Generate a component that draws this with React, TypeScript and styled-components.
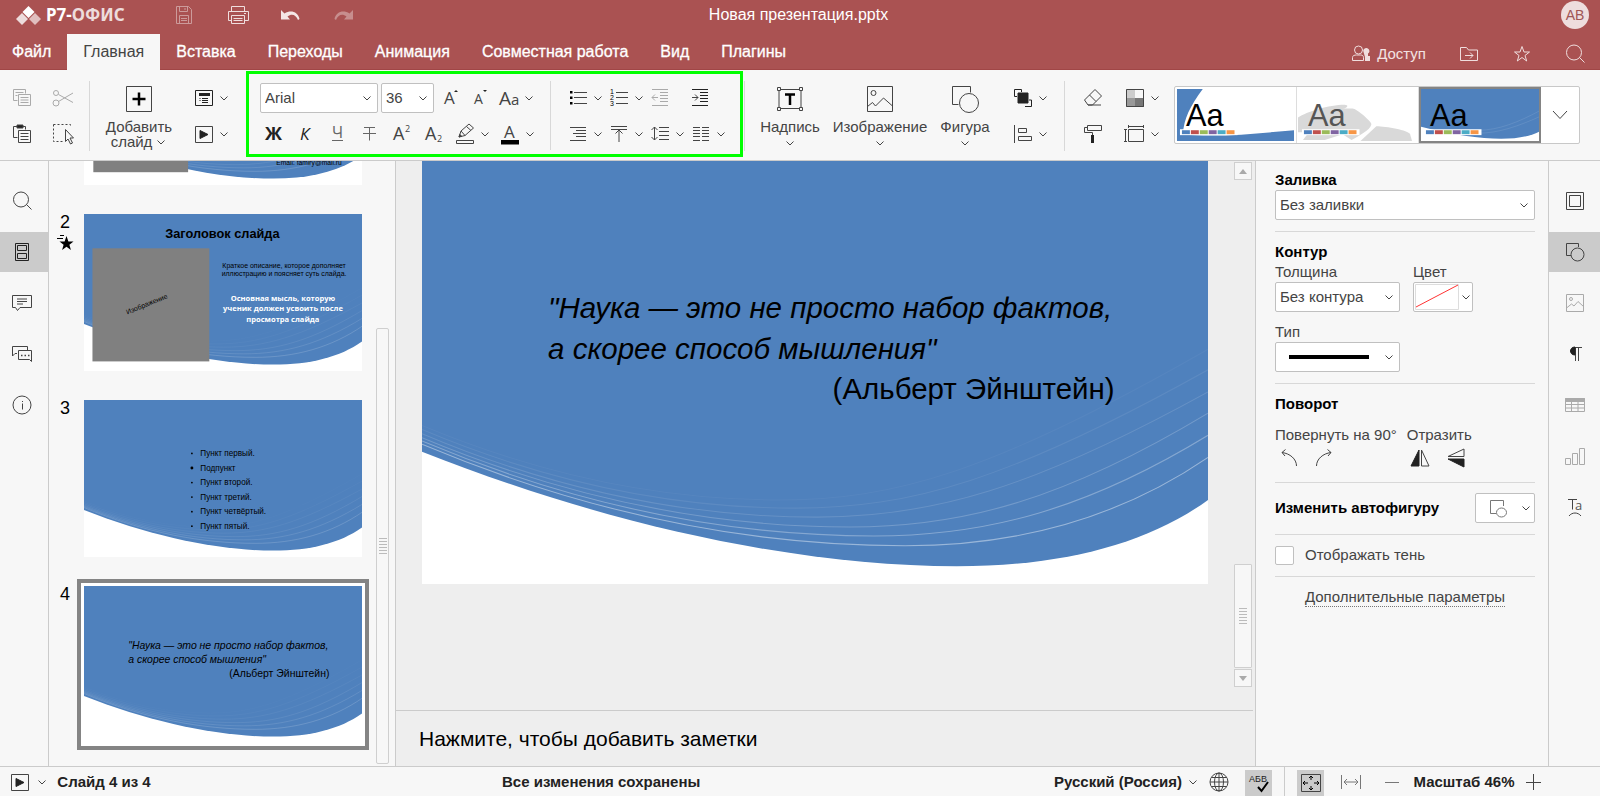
import React from 'react';
import styled, { createGlobalStyle, css } from 'styled-components';

const SANS = '"Liberation Sans", Arial, sans-serif';
const BLUE = '#4f81bd';

const Global = createGlobalStyle`
  *, *::before, *::after { box-sizing: border-box; }
  html, body, #root { height: 100%; margin: 0; }
  body { font: 15px/20px ${SANS}; color: #444; background: #f7f7f7; overflow: hidden; }
  button, select, input, textarea { font: inherit; color: inherit; margin: 0; }
  button { background: none; border: 0; padding: 0; cursor: pointer; white-space: nowrap; }
`;

const Shell = styled.div`
  display: flex;
  flex-direction: column;
  height: 100vh;
`;

/* ---------- icons ---------- */

const Svg = styled.svg<{ $tone?: string }>`
  display: block;
  flex: none;
  fill: none;
  stroke: ${p => p.$tone || '#444'};
  stroke-width: 1;
  overflow: visible;
`;

type IconProps = { w?: number; h?: number; tone?: string; children: React.ReactNode };
const Icon = ({ w = 20, h = 20, tone, children }: IconProps) => (
  <Svg width={w} height={h} viewBox={`0 0 ${w} ${h}`} $tone={tone} aria-hidden="true">{children}</Svg>
);

const Chevron = () => (
  <Icon w={12} h={8}><path d="M2.500 2.500L6 6l3.500-3.500" /></Icon>
);

/* ---------- header ---------- */

const Header = styled.header`
  flex: none;
  background: #aa5252;
  color: #fff;
  border-bottom: 1px solid #a04646;
`;

const TitleRow = styled.div`
  display: grid;
  grid-template-columns: 1fr auto 1fr;
  align-items: center;
  height: 30px;
  padding: 0 11px 0 16px;
`;

const TitleLeft = styled.div`
  display: flex;
  align-items: center;
`;

const Brand = styled.a`
  display: flex;
  align-items: center;
  gap: 5px;
  width: 157px;
  height: 26px;
  color: #fff;
  text-decoration: none;
  font: 700 17px/26px "Noto Sans", sans-serif;
`;

const BrandTail = styled.span`
  color: #eddcdc;
`;

const QuickButton = styled.button`
  display: flex;
  width: 54px;
`;

const DocTitle = styled.h1`
  margin: 0 8px 0 0;
  font: 400 16px/30px ${SANS};
`;

const Avatar = styled.button`
  justify-self: end;
  width: 28px;
  height: 28px;
  border-radius: 50%;
  background: #eedddd;
  color: #a05555;
  font-size: 14px;
`;

const TabRow = styled.nav`
  display: flex;
  align-items: stretch;
  height: 39px;
  padding-top: 4px;
`;

const Tab = styled.button<{ $active?: boolean }>`
  padding: 0 16px 0 16px;
  color: #fff;
  font-size: 16px;
  -webkit-text-stroke: 0.3px currentColor;
  ${p => p.$active && css`
    background: #f7f7f7;
    color: #444;
    -webkit-text-stroke: 0;
    margin-bottom: -1px;
  `}
  &:first-child { padding-left: 12px; }
`;

const HeaderActions = styled.div`
  display: flex;
  align-items: center;
  gap: 33px;
  margin-left: auto;
  padding: 4px 15px 0 0;
`;

const HeaderButton = styled.button`
  display: flex;
  align-items: center;
  gap: 6px;
  color: #f3e3e3;
`;

/* ---------- toolbar ---------- */

const Toolbar = styled.div`
  flex: none;
  display: flex;
  align-items: stretch;
  height: 91px;
  background: #f7f7f7;
  border-bottom: 1px solid #cbcbcb;
`;

const Rows = styled.div<{ $ml?: number }>`
  display: flex;
  flex-direction: column;
  gap: 6px;
  padding-top: 13px;
  margin-left: ${p => p.$ml || 0}px;
`;

const Row = styled.div<{ $indent?: number }>`
  display: flex;
  align-items: center;
  height: 30px;
  padding-left: ${p => p.$indent || 0}px;
`;

const Spacer = styled.span`
  width: 12px;
`;

const Divider = styled.div<{ $ml?: number; $mr?: number }>`
  flex: none;
  width: 1px;
  margin: 11px ${p => p.$mr || 0}px 9px ${p => p.$ml || 0}px;
  background: #d8d8d8;
`;

const ToolButton = styled.button<{ $w: number }>`
  display: flex;
  align-items: center;
  justify-content: center;
  flex: none;
  width: ${p => p.$w}px;
  height: 28px;
`;

const SplitButton = styled(ToolButton)`
  justify-content: flex-start;
`;

const SplitIcon = styled.span`
  display: flex;
  justify-content: center;
  width: 28px;
`;

const BigButton = styled.button<{ $w: number }>`
  display: flex;
  flex-direction: column;
  align-items: center;
  flex: none;
  width: ${p => p.$w}px;
  padding-top: 15px;
  line-height: 15px;
`;

const BigIcon = styled.span`
  display: flex;
  align-items: center;
  height: 28px;
  margin-bottom: 6px;
`;

const BigLabel = styled.span`
  display: flex;
  align-items: center;
  gap: 3px;
`;

const BigArrow = styled.span`
  margin-top: 5px;
`;

const Highlight = styled.section`
  display: flex;
  flex: none;
  width: 497px;
  margin: 1px 0 3px;
  border: 3px solid #00ff00;
  ${Rows} { padding-top: 9px; }
  ${Divider} { margin-top: 7px; margin-bottom: 4px; }
`;

const SelectBox = styled.span<{ $w?: number }>`
  position: relative;
  display: flex;
  align-items: center;
  flex: none;
  width: ${p => (p.$w ? `${p.$w}px` : '100%')};
  height: 30px;
  border: 1px solid #c0c0c0;
  border-radius: 2px;
  background: #fff;
  select {
    appearance: none;
    width: 100%;
    height: 100%;
    padding: 0 20px 0 4px;
    border: 0;
    background: transparent;
  }
  > svg {
    position: absolute;
    right: 4px;
    pointer-events: none;
  }
`;

const RibbonSelect = styled(SelectBox)`
  margin-right: 3px;
`;

const LineSample = styled.span`
  position: absolute;
  left: 13px;
  width: 80px;
  height: 4px;
  background: #000;
  pointer-events: none;
`;

const Gallery = styled.div`
  display: flex;
  flex: 1 1 406px;
  max-width: 406px;
  margin: 16px 20px 16px auto;
  border: 1px solid #c8c8c8;
  border-radius: 2px;
  background: #fff;
`;

const ThemeButton = styled.button<{ $active?: boolean }>`
  flex: 1 1 122px;
  min-width: 0;
  border-right: 1px solid #ddd;
  ${p => p.$active && css`
    outline: 2px solid #848484;
    outline-offset: -2px;
  `}
  svg { display: block; width: 100%; height: 100%; }
`;

const GalleryMore = styled.button`
  display: flex;
  align-items: center;
  justify-content: center;
  width: 38px;
`;

/* ---------- work area ---------- */

const Work = styled.main`
  display: flex;
  flex: 1;
  min-height: 0;
`;

const RailButton = styled.button<{ $active?: boolean }>`
  display: flex;
  align-items: center;
  justify-content: center;
  height: 40px;
  background: ${p => (p.$active ? '#cbcbcb' : 'transparent')};
`;

const Rail = styled.nav<{ $w: number; $side: 'left' | 'right' }>`
  display: flex;
  flex-direction: column;
  flex: none;
  gap: 11px;
  width: ${p => p.$w}px;
  padding-top: 20px;
  background: #f7f7f7;
  border: 0 solid #cbcbcb;
  ${p => (p.$side === 'left' ? css`
    border-right-width: 1px;
    ${RailButton} { padding-right: 4px; }
  ` : css`
    border-left-width: 1px;
  `)}
`;

const ThumbPanel = styled.aside`
  display: flex;
  flex: none;
  width: 347px;
  background: #f7f7f7;
  border-right: 1px solid #cbcbcb;
  overflow: hidden;
`;

const ThumbList = styled.ol`
  display: flex;
  flex: 1;
  flex-direction: column;
  justify-content: flex-end;
  gap: 15px;
  margin: 0;
  padding: 0 0 16px;
  list-style: none;
`;

const ThumbItem = styled.li`
  display: flex;
`;

const ThumbNumber = styled.div`
  display: flex;
  flex-direction: column;
  align-items: center;
  gap: 3px;
  width: 28px;
  padding: 5px 0 0 4px;
  color: #000;
  font-size: 18px;
`;

const ThumbFrame = styled.button<{ $active?: boolean }>`
  width: 292px;
  height: 171px;
  padding: 3px;
  border: 4px solid ${p => (p.$active ? '#848484' : 'transparent')};
  background: ${p => (p.$active ? '#fff' : 'transparent')};
  svg { display: block; width: 100%; height: 100%; }
`;

const ThumbScroll = styled.div`
  display: flex;
  align-items: center;
  justify-content: center;
  align-self: flex-end;
  width: 13px;
  height: 72%;
  margin: 0 6px 2px 0;
  border: 1px solid #cfcfcf;
  border-radius: 2px;
`;

const Center = styled.section`
  display: flex;
  flex: 1;
  flex-direction: column;
  min-width: 0;
  background: #eee;
`;

const Stage = styled.div`
  display: flex;
  flex: 1;
  min-height: 0;
`;

const Canvas = styled.div`
  flex: 1;
  min-width: 0;
  padding: 0 26px;
  overflow: hidden;
  svg { display: block; width: 100%; }
`;

const CanvasScroll = styled.div`
  display: flex;
  flex-direction: column;
  width: 18px;
  margin: 1px 3px 23px 0;
`;

const ScrollArrow = styled.button`
  display: flex;
  align-items: center;
  justify-content: center;
  flex: none;
  height: 18px;
  border: 1px solid #cfcfcf;
  background: #f7f7f7;
`;

const ScrollThumb = styled.div`
  display: flex;
  align-items: center;
  justify-content: center;
  height: 104px;
  margin: auto 0 1px;
  border: 1px solid #cfcfcf;
  border-radius: 1px;
  background: #f7f7f7;
`;

const Notes = styled.textarea`
  flex: none;
  height: 56px;
  margin-right: 2px;
  padding: 15px 23px;
  border: 0;
  border-top: 1px solid #cbcbcb;
  background: #eee;
  color: #000;
  font-size: 21px;
  line-height: 25px;
  resize: none;
  overflow: hidden;
`;

/* ---------- settings panel ---------- */

const Settings = styled.aside`
  flex: none;
  width: 293px;
  padding: 9px 13px 0 19px;
  background: #f7f7f7;
  border-left: 1px solid #cbcbcb;
`;

const Section = styled.section`
  padding-bottom: 11px;
  margin-bottom: 10px;
  border-bottom: 1px solid #d8d8d8;
`;

const PanelTitle = styled.h2`
  display: block;
  margin: 0;
  color: #000;
  font: 700 15px/20px ${SANS};
`;

const Fields = styled.div<{ $gap: number; $top?: number }>`
  display: flex;
  gap: ${p => p.$gap}px;
  margin-top: ${p => p.$top || 0}px;
`;

const Field = styled.label<{ $w: number }>`
  display: flex;
  flex-direction: column;
  width: ${p => p.$w}px;
`;

const ColorButton = styled.button`
  display: flex;
  align-items: center;
  gap: 1px;
  width: 60px;
  height: 30px;
  padding-left: 1px;
  border: 1px solid #c0c0c0;
  border-radius: 2px;
  background: #fff;
`;

const GroupLabel = styled.div`
  white-space: nowrap;
`;

const FlipRow = styled.div`
  display: flex;
  gap: 16px;
  height: 26px;
  align-items: center;
  padding-left: 3px;
`;

const ShapeRow = styled.div`
  display: flex;
  align-items: center;
  justify-content: space-between;
`;

const ShapeButton = styled.button`
  display: flex;
  align-items: center;
  justify-content: flex-end;
  gap: 12px;
  width: 60px;
  height: 30px;
  padding-right: 2px;
  border: 1px solid #c0c0c0;
  border-radius: 2px;
  background: #fff;
`;

const CheckLabel = styled.label`
  display: flex;
  align-items: center;
  gap: 11px;
  height: 20px;
  input {
    appearance: none;
    width: 19px;
    height: 19px;
    border: 1px solid #c0c0c0;
    border-radius: 2px;
    background: #fff;
  }
`;

const AdvancedRow = styled.div`
  display: flex;
  justify-content: center;
`;

const Advanced = styled.a`
  color: #444;
  line-height: 19px;
  text-decoration: none;
  border-bottom: 1px dotted #777;
`;

/* ---------- status bar ---------- */

const Status = styled.footer`
  display: grid;
  grid-template-columns: 502px 1fr auto;
  grid-template-rows: 100%;
  align-items: center;
  flex: none;
  height: 30px;
  padding-right: 56px;
  border-top: 1px solid #cbcbcb;
  background: #f7f7f7;
  color: #222;
  font-weight: 700;
  white-space: nowrap;
`;

const StatusGroup = styled.div<{ $pl?: number }>`
  display: flex;
  align-items: center;
  height: 100%;
  padding-left: ${p => p.$pl || 0}px;
`;

const StatusButton = styled.button<{ $active?: boolean; $w: number; $mr?: number }>`
  display: flex;
  align-items: center;
  justify-content: center;
  width: ${p => p.$w}px;
  margin-right: ${p => p.$mr || 0}px;
  height: 100%;
  ${p => p.$active && css`
    height: 26px;
    margin-top: 3px;
    background: #cbcbcb;
  `}
`;

const StatusDivider = styled.span`
  width: 1px;
  height: 100%;
  margin: 0 12px;
  background: #cbcbcb;
`;

/* ---------- slides: drawn in points on a 960 x 540 page ---------- */

const WAVES = [
  { l: 369, x: 590, m: 493, r: 385, o: 0.42 },
  { l: 365, x: 552, m: 481, r: 358, o: 0.3 },
  { l: 361, x: 523, m: 470, r: 331, o: 0.2 },
  { l: 356, x: 482, m: 458, r: 305, o: 0.13 },
  { l: 351, x: 456, m: 447, r: 278, o: 0.08 },
  { l: 346, x: 436, m: 437, r: 253, o: 0.04 },
];

const SlideBack = () => (
  <>
    <rect width="960" height="540" fill="#fff" />
    <path d="M0 0H960V437C885 491 782 518 653 518C464 518 232 470 0 378Z" fill={BLUE} />
    {WAVES.map(w => (
      <path
        key={w.l}
        d={`M0 ${w.l}C${w.x * 0.36} ${w.l + (w.m - w.l) * 0.72} ${w.x * 0.7} ${w.m} ${w.x} ${w.m}C${w.x + 140} ${w.m} ${w.x + 262} ${w.m - 34} 960 ${w.r}`}
        fill="none"
        stroke="#fff"
        strokeWidth="1.3"
        strokeOpacity={w.o}
      />
    ))}
  </>
);

const SlideText = styled.text<{ $size: number; $bold?: boolean; $italic?: boolean; $color?: string; $face?: string }>`
  font-family: ${p => p.$face || SANS};
  font-size: ${p => p.$size}px;
  font-weight: ${p => (p.$bold ? 700 : 400)};
  font-style: ${p => (p.$italic ? 'italic' : 'normal')};
  fill: ${p => p.$color || '#000'};
`;

const Slide = ({ crop = 0, children }: { crop?: number; children: React.ReactNode }) => (
  <svg viewBox={`0 ${crop} 960 ${540 - crop}`} preserveAspectRatio="xMidYMid slice">
    <SlideBack />
    {children}
  </svg>
);

const ContactSlide = () => (
  <>
    <rect x="34" y="110" width="326" height="386" fill="#808080" />
    <SlideText $size={23} x="776" y="471" textAnchor="middle">Email: famiry@mail.ru</SlideText>
  </>
);

const TitleSlide = () => (
  <>
    <SlideText $size={44} $bold x="478" y="81" textAnchor="middle">Заголовок слайда</SlideText>
    <rect x="31" y="118" width="402" height="389" fill="#808080" />
    <SlideText $size={24} x="218" y="318" textAnchor="middle" transform="rotate(-22 218 310)">Изображение</SlideText>
    <SlideText $size={24} x="690" y="186" textAnchor="middle">Краткое описание, которое дополняет</SlideText>
    <SlideText $size={24} x="690" y="214" textAnchor="middle">иллюстрацию и поясняет суть слайда.</SlideText>
    {['Основная мысль, которую', 'ученик должен усвоить после', 'просмотра слайда'].map((t, i) => (
      <SlideText key={t} $size={26} $bold $color="#fff" $face={'"Open Sans", sans-serif'} x="686" y={300 + i * 35} textAnchor="middle">{t}</SlideText>
    ))}
  </>
);

const POINTS = ['Пункт первый.', 'Подпункт', 'Пункт второй.', 'Пункт третий.', 'Пункт четвёртый.', 'Пункт пятый.'];

const ListSlide = () => (
  <>
    {POINTS.map((t, i) => (
      <g key={t}>
        <circle cx="373" cy={184 + i * 50} r={i === 1 ? 5 : 3} fill="#000" />
        <SlideText $size={28} x="402" y={193 + i * 50}>{t}</SlideText>
      </g>
    ))}
  </>
);

const QuoteSlide = () => (
  <>
    <SlideText $size={36} $italic x="154" y="215">"Наука — это не просто набор фактов,</SlideText>
    <SlideText $size={36} $italic x="154" y="265">а скорее способ мышления"</SlideText>
    <SlideText $size={36} x="846" y="314" textAnchor="end">(Альберт Эйнштейн)</SlideText>
  </>
);

const THUMBS = [
  { n: 1, body: <ContactSlide /> },
  { n: 2, body: <TitleSlide />, animated: true },
  { n: 3, body: <ListSlide /> },
  { n: 4, body: <QuoteSlide />, active: true },
];

/* ---------- icon drawings ---------- */

const Glyph = styled.text<{ $size: number; $tone?: string; $bold?: boolean; $face?: string }>`
  font-family: ${p => p.$face || '"Open Sans", sans-serif'};
  font-size: ${p => p.$size}px;
  font-weight: ${p => (p.$bold ? 700 : 400)};
  fill: ${p => p.$tone || '#444'};
  stroke: none;
`;

const PlayBox = () => (
  <Icon><path d="M1.500 2.500h17v16h-17z" /><path d="M6 6.500v8l8-4z" fill="#222" stroke="#222" /></Icon>
);

const ShapesIcon = () => (
  <Icon><path d="M6 13.500H1.500v-12h12V5" /><circle cx="12.500" cy="12.500" r="6.500" /></Icon>
);

const BigShapes = () => (
  <Icon w={28} h={28}><path d="M7.500 19.500h-6v-18h18v6" /><circle cx="18" cy="18" r="9.500" /></Icon>
);

const Picture = ({ tone }: { tone?: string }) => (
  <Icon tone={tone}><path d="M1.500 1.500h17v17h-17zM1.500 15l5-4 2.500 2 4-4.500 5.500 5" /><circle cx="6" cy="6" r="1.500" /></Icon>
);

const Grip = () => (
  <Icon w={8} h={18} tone="#bbb"><path d="M0 1.500h8M0 4.500h8M0 7.500h8M0 10.500h8M0 13.500h8M0 16.500h8" /></Icon>
);

const Search = ({ tone }: { tone?: string }) => (
  <Icon tone={tone}><circle cx="9" cy="8.500" r="7.500" /><path d="M14.500 13.500l5 5" /></Icon>
);

const Split = ({ w = 41, label, children }: { w?: number; label: string; children: React.ReactNode }) => (
  <SplitButton $w={w} title={label} aria-label={label}>
    <SplitIcon>{children}</SplitIcon>
    <Chevron />
  </SplitButton>
);

const Tool = ({ w = 32, label, children }: { w?: number; label: string; children: React.ReactNode }) => (
  <ToolButton $w={w} title={label} aria-label={label}>{children}</ToolButton>
);

const SWATCHES = ['#4f81bd', '#c0504d', '#9bbb59', '#8064a2', '#4bacc6', '#f79646'];

const ThemePreview = ({ kind }: { kind: number }) => (
  <svg viewBox="0 0 122 57" preserveAspectRatio="none" aria-hidden="true">
    {kind === 0 && <path d="M2 2H28C15 20 9 32 8 48C40 52 85 47 120 44V55H2Z" fill={BLUE} />}
    {kind === 1 && (
      <g fill="#d9d9d9">
        <path d="M1 31C10 25 32 18 48 18C52 18 52 21 46 22L56 22C60 22 76 36 75 38C74 44 62 50 55 54L46 48L28 54H6L12 46H1Z" />
        <path d="M80 40C90 40 112 44 114 48L116 55H64Z" />
      </g>
    )}
    {kind === 2 && (
      <>
        <path d="M0 0H122V45C100 57 60 55 0 40Z" fill={BLUE} />
        <path d="M60 47C80 47 100 40 122 30M60 44C80 44 100 36 122 24" stroke="#fff" fill="none" opacity="0.1" />
      </>
    )}
    <text x="11" y="40" fontFamily={SANS} fontSize="31" fill={kind === 1 ? '#555' : '#000'}>Aa</text>
    <rect x="5" y="43" width="58" height="6" fill="#fff" />
    {SWATCHES.map((c, i) => <rect key={c} x={7 + i * 9} y="44" width="8" height="4" fill={c} />)}
  </svg>
);

const TABS = ['Файл', 'Главная', 'Вставка', 'Переходы', 'Анимация', 'Совместная работа', 'Вид', 'Плагины'];

/* ---------- page ---------- */

const TopBar = () => (
  <Header>
    <TitleRow>
      <TitleLeft>
        <Brand href="#">
          <Icon w={25} h={19} tone="none">
            <path d="M12.500 0l6 6-6 6-6-6z" fill="#fff" />
            <path d="M6 7l6 6-6 6-6-6z" fill="#eddcdc" />
            <path d="M19 7l6 6-6 6-6-6z" fill="#e0bebe" />
          </Icon>
          <span>Р7-<BrandTail>ОФИС</BrandTail></span>
        </Brand>
        <QuickButton aria-label="Сохранить">
          <Icon tone="#cc9b9b"><path d="M3.500 1.500h12l3 3v14h-15zM6.500 1.500v5h8v-5M12 3v2M6.500 18.500v-8h9v8M8 13.500h6M8 15.500h6" /></Icon>
        </QuickButton>
        <QuickButton aria-label="Печать">
          <Icon w={23} tone="#f0dede"><path d="M4.500 6V1.500h13V6M4.500 15.500h-3v-9h20v9h-4M4.500 10.500h13v8h-13zM6.500 13.500h9M6.500 15.500h9M17 8.500h2" /></Icon>
        </QuickButton>
        <QuickButton aria-label="Отменить">
          <Icon tone="none"><path d="M0 5v9.500h9L6.500 11.500C11 8 15 10 17 15l1.500-1C17 7 10 4.500 3.500 8.500z" fill="#f5e6e6" /></Icon>
        </QuickButton>
        <QuickButton aria-label="Повторить">
          <Icon tone="none"><path d="M18 5v9.500H9l2.500-3C7 8 3 10 1 15l-1.500-1C1 7 8 4.500 14.500 8.500z" fill="#c78e8e" /></Icon>
        </QuickButton>
      </TitleLeft>
      <DocTitle>Новая презентация.pptx</DocTitle>
      <Avatar>АВ</Avatar>
    </TitleRow>
    <TabRow>
      {TABS.map((t, i) => <Tab key={t} $active={i === 1}>{t}</Tab>)}
      <HeaderActions>
        <HeaderButton>
          <Icon tone="#f0dede">
            <circle cx="7.500" cy="6" r="4" />
            <path d="M1.500 16.500v-3c0-2 2-2.500 4-2.500h4c2 0 3 1 3 2.500v3z" />
            <path d="M12.500 8a3 3 0 1 1 4.500 1.500V12h2v5h-5v-4z" fill="#f0dede" stroke="none" />
          </Icon>
          Доступ
        </HeaderButton>
        <HeaderButton aria-label="Открыть расположение файла">
          <Icon tone="#f0dede"><path d="M1.500 16.500v-13h6l2 2.500h9v10.500zM6 11.500h8M11 8.500l3 3-3 3" /></Icon>
        </HeaderButton>
        <HeaderButton aria-label="Избранное">
          <Icon tone="#f0dede"><path d="M10 2.500l2 5.500h5.500l-4.500 3.500 1.700 5.500L10 13.500 5.300 17 7 11.500 2.500 8H8z" /></Icon>
        </HeaderButton>
        <HeaderButton aria-label="Поиск"><Search tone="#f0dede" /></HeaderButton>
      </HeaderActions>
    </TabRow>
  </Header>
);

const Ribbon = () => (
  <Toolbar>
    <Rows $ml={2}>
      <Row>
        <Tool w={40} label="Копировать">
          <Icon tone="#aaa"><path d="M5.500 12.500h-4v-11h12v4M3.500 4.500h8M3.500 7.500h2M6.500 6.500h12v11h-12zM8.500 9.500h8M8.500 12h8M8.500 14.500h8" /></Icon>
        </Tool>
        <Tool w={42} label="Вырезать">
          <Icon w={22} tone="#aaa"><circle cx="4" cy="5" r="2.500" /><circle cx="4" cy="15" r="3" /><path d="M6.500 6.500L21 14.500M6.500 13.500L21 5" /></Icon>
        </Tool>
      </Row>
      <Row>
        <Tool w={40} label="Вставить">
          <Icon><path d="M5.500 13.500h-4v-11h12v3" /><path d="M5 1h6v3H5z" fill="#222" /><path d="M6.500 6.500h12v12h-12zM8.500 9.500h8M8.500 12.500h8M8.500 15.500h8" /></Icon>
        </Tool>
        <Tool w={42} label="Выделить">
          <Icon w={22} h={22}><path d="M1.500 1.500h17v3M1.500 1.500v17h9" strokeDasharray="2 2" /><path d="M13.500 6.500v12l2.500-2.500 2.500 5 2-1-2.500-5h3.500z" /></Icon>
        </Tool>
      </Row>
    </Rows>
    <Divider $ml={5} />
    <BigButton $w={98}>
      <BigIcon><Icon w={26} h={26}><path d="M.5.500h25v25H.5z" /><path d="M13 6.500v13M6.500 13h13" stroke="#000" strokeWidth="2.500" /></Icon></BigIcon>
      <BigLabel>Добавить</BigLabel>
      <BigLabel>слайд <Chevron /></BigLabel>
    </BigButton>
    <Rows $ml={2}>
      <Row>
        <Split w={56} label="Макет">
          <Icon><path d="M1.500 2.500h17v15h-17z" stroke="#222" /><path d="M5 5h11v3H5z" fill="#222" stroke="none" /><path d="M8 10.500h6M5.500 10.500h1M5.500 12.500h1M8 12.500h6M8 14.500h6" stroke="#222" /></Icon>
        </Split>
      </Row>
      <Row><Split w={56} label="Показ"><PlayBox /></Split></Row>
    </Rows>
    <Highlight>
      <Rows $ml={8}>
        <Row $indent={3}>
          <RibbonSelect $w={118}>
            <select aria-label="Шрифт"><option>Arial</option></select>
            <Chevron />
          </RibbonSelect>
          <RibbonSelect $w={53}>
            <select aria-label="Размер"><option>36</option></select>
            <Chevron />
          </RibbonSelect>
          <Tool w={29} label="Увеличить шрифт"><Icon><Glyph $size={17} x="2" y="16">A</Glyph><path d="M12 4l2-2 2 2z" fill="#222" stroke="none" /></Icon></Tool>
          <Tool w={29} label="Уменьшить шрифт"><Icon><Glyph $size={14} x="3" y="16">A</Glyph><path d="M12 2l2 2 2-2z" fill="#222" stroke="none" /></Icon></Tool>
          <Split label="Регистр"><Icon w={22}><Glyph $size={19} x="1" y="17">A</Glyph><Glyph $size={15} x="13" y="17">a</Glyph></Icon></Split>
        </Row>
        <Row>
          <Tool label="Полужирный"><Icon><Glyph $size={18} $bold $tone="#222" x="2" y="16">Ж</Glyph></Icon></Tool>
          <Tool label="Курсив"><Icon><Glyph $size={17} $tone="#222" x="5" y="16" fontStyle="italic">К</Glyph></Icon></Tool>
          <Tool label="Подчеркнутый"><Icon><Glyph $size={16} $tone="#666" x="5" y="14">Ч</Glyph><path d="M5 16.500h11" stroke="#666" /></Icon></Tool>
          <Tool label="Зачеркнутый"><Icon tone="#666"><path d="M5 3.500h11M10.500 3.500v13M4 9.500h13" /></Icon></Tool>
          <Tool label="Надстрочный"><Icon><Glyph $size={18} x="2" y="16">A</Glyph><Glyph $size={9} x="14" y="8">2</Glyph></Icon></Tool>
          <Tool w={34} label="Подстрочный"><Icon><Glyph $size={18} x="1" y="16">A</Glyph><Glyph $size={9} x="13" y="18">2</Glyph></Icon></Tool>
          <Split w={45} label="Цвет выделения">
            <Icon h={22}><path d="M4 14l2-6 8-7 4.500 4L10 12.500zM6 8l4 4.500M11.500 3.500l4.500 4" /><path d="M4 14l.7-2.500 2 1.700z" fill="#222" /><path d="M1.500 17.500h17v3h-17z" /></Icon>
          </Split>
          <Split label="Цвет шрифта">
            <Icon h={22}><Glyph $size={17} x="4" y="15">A</Glyph><path d="M1 17h18v4.500H1z" fill="#000" stroke="none" /></Icon>
          </Split>
        </Row>
      </Rows>
      <Divider $ml={13} $mr={13} />
      <Rows>
        <Row>
          <Split label="Маркеры"><Icon><path d="M6 4.500h13M6 9.500h13M6 15.500h13" /><path d="M2 3h2.500v2.500H2zM2 8.500h2.500V11H2zM2 14h2.500v2.500H2z" fill="#000" stroke="none" /></Icon></Split>
          <Split label="Нумерация">
            <Icon>
              <path d="M7 4.500h12M7 9.500h12M7 15.500h12" />
              {['1', '2', '3'].map((n, i) => (
                <Glyph key={n} $size={7} $face={SANS} $tone="#000" x="1" y={6 + i * 6}>{n}</Glyph>
              ))}
            </Icon>
          </Split>
          <Tool w={28} label="Уменьшить отступ"><Icon tone="#aaa"><path d="M2 1.500h16M10 4.500h8M10 7.500h8M10 10.500h8M10 13.500h8M2 17.500h16M2 9.500h6M5 6.500l-3 3 3 3" /></Icon></Tool>
          <Spacer />
          <Tool w={28} label="Увеличить отступ"><Icon><path d="M2 1.500h16M10 4.500h8M10 7.500h8M10 10.500h8M10 13.500h8M2 17.500h16" stroke="#222" /><path d="M2 9.500h6M5 6.500l3 3-3 3" /></Icon></Tool>
        </Row>
        <Row>
          <Split label="Выравнивание"><Icon><path d="M2 3.500h16M8 6.500h10M5 9.500h13M8 12.500h10M2 16.500h16" /></Icon></Split>
          <Split label="Вертикальное выравнивание"><Icon><path d="M2 2.500h16M2 5.500h16M10 6v12M6.500 9.500L10 6l3.500 3.500" /></Icon></Split>
          <Split label="Интервал"><Icon><path d="M9 3.500h10M9 7.500h10M9 11.500h10M9 15.500h10M4.500 3v13M1.500 6l3-3 3 3M1.500 13l3 3 3-3" /></Icon></Split>
          <Split label="Колонки"><Icon><path d="M2 3.500h7M11 3.500h7M2 6.500h7M11 6.500h7M2 9.500h7M11 9.500h7M2 12.500h7M11 12.500h7M2 16.500h7M11 16.500h7" /></Icon></Split>
        </Row>
      </Rows>
    </Highlight>
    <Divider $ml={1} $mr={4} />
    <BigButton $w={82}>
      <BigIcon><Icon w={28} h={26}><path d="M3 3.500h22v19H3z" /><path d="M1.500 1.500h3v3h-3zM23.500 1.500h3v3h-3zM1.500 21.500h3v3h-3zM23.500 21.500h3v3h-3z" fill="#f7f7f7" /><path d="M9 8.500h10M14 8v11" stroke="#000" strokeWidth="2.500" /></Icon></BigIcon>
      <BigLabel>Надпись</BigLabel><BigArrow><Chevron /></BigArrow>
    </BigButton>
    <BigButton $w={98}>
      <BigIcon><Icon w={26} h={26}><path d="M.5.500h25v25H.5zM.5 20.500l5-4 3 3.500 8-8 9 8" /><circle cx="6.500" cy="7" r="2.500" /></Icon></BigIcon>
      <BigLabel>Изображение</BigLabel><BigArrow><Chevron /></BigArrow>
    </BigButton>
    <BigButton $w={72}>
      <BigIcon><BigShapes /></BigIcon>
      <BigLabel>Фигура</BigLabel><BigArrow><Chevron /></BigArrow>
    </BigButton>
    <Rows $ml={8}>
      <Row>
        <Split w={46} label="Порядок"><Icon><path d="M4 8.500H1.500v-7h7V4M12 18.500h6.500V12H16" stroke="#222" /><path d="M5 5h10v10H5z" fill="#222" stroke="#222" /></Icon></Split>
      </Row>
      <Row>
        <Split w={46} label="Выровнять"><Icon><path d="M1.500 1v18M5.500 4.500h8v4h-8zM5.500 12.500h13v4h-13z" /></Icon></Split>
      </Row>
    </Rows>
    <Divider $ml={9} $mr={12} />
    <Rows>
      <Row>
        <Tool label="Очистить"><Icon><path d="M1.500 12L12 1.500l6.500 6.500-9 9H5zM6.500 7l6.500 6.500M5 17h13" /></Icon></Tool>
        <Spacer />
        <Split w={44} label="Цветовая схема">
          <Icon><path d="M1 1h9v9H1z" fill="#ccc" stroke="none" /><path d="M1 10h9v9H1z" fill="#999" stroke="none" /><path d="M10 10h9v9h-9z" fill="#777" stroke="none" /><path d="M1.500 1.500h17v17h-17z" /></Icon>
        </Split>
      </Row>
      <Row>
        <Tool label="Копировать стиль"><Icon><path d="M4.500 1.500h14v5h-14zM4 3.500H1.500v5h8V11" /><path d="M8 11h3v8H8z" fill="#222" stroke="none" /></Icon></Tool>
        <Spacer />
        <Split w={44} label="Размер слайда"><Icon w={22}><path d="M4.500 5.500h15v12h-15zM4 2.500h16M4.500 1v3M19.500 1v3M1.500 5v13M0 5.500h3M0 17.500h3" /></Icon></Split>
      </Row>
    </Rows>
    <Gallery>
      <ThemeButton aria-label="Тема 1"><ThemePreview kind={0} /></ThemeButton>
      <ThemeButton aria-label="Тема 2"><ThemePreview kind={1} /></ThemeButton>
      <ThemeButton aria-label="Тема 3" $active><ThemePreview kind={2} /></ThemeButton>
      <GalleryMore aria-label="Все темы"><Icon w={18} h={12}><path d="M2 2l7 7.500L16 2" /></Icon></GalleryMore>
    </Gallery>
  </Toolbar>
);

const LeftRail = () => (
  <Rail $w={49} $side="left">
    <RailButton aria-label="Поиск"><Search /></RailButton>
    <RailButton aria-label="Слайды" $active><Icon tone="#222"><path d="M3.500 1.500h13v17h-13zM5.500 3.500h9v5h-9zM5.500 11.500h9v5h-9z" /></Icon></RailButton>
    <RailButton aria-label="Комментарии"><Icon><path d="M.5 2.500h19v12H8l-2.500 3-2-3h-3zM5 6h10M5 8.500h10M5 11h6" /></Icon></RailButton>
    <RailButton aria-label="Чат"><Icon><path d="M5 9.500H3l-2.500 2.500V2.500h15V6M6.500 6.500h13v11l-2-2h-11z" /><path d="M9 11.500h1.500M12.500 11.500h1.500M16 11.500h1.500" strokeWidth="1.500" /></Icon></RailButton>
    <RailButton aria-label="О программе"><Icon><circle cx="10" cy="10" r="9" /><path d="M10.500 6v1M10.500 8.500v6" /></Icon></RailButton>
  </Rail>
);

const Thumbnails = () => (
  <ThumbPanel>
    <ThumbList>
      {THUMBS.map(t => (
        <ThumbItem key={t.n}>
          <ThumbNumber>
            {t.n}
            {t.animated && (
              <Icon w={18} h={18} tone="#000"><path d="M10.500 1l1.900 5.500h5.100l-4.100 3.200 1.500 5.300-4.400-3.200-4.400 3.200 1.500-5.300-4.100-3.200h5.100z" fill="#000" stroke="none" /><path d="M4 .5h4M1 3.500h6" /></Icon>
            )}
          </ThumbNumber>
          <ThumbFrame $active={t.active} aria-label={`Слайд ${t.n}`}><Slide>{t.body}</Slide></ThumbFrame>
        </ThumbItem>
      ))}
    </ThumbList>
    <ThumbScroll><Grip /></ThumbScroll>
  </ThumbPanel>
);

const Editor = () => (
  <Center>
    <Stage>
      <Canvas><Slide crop={23}><QuoteSlide /></Slide></Canvas>
      <CanvasScroll>
        <ScrollArrow aria-label="Вверх"><Icon w={8} h={5} tone="none"><path d="M0 5l4-5 4 5z" fill="#aaa" /></Icon></ScrollArrow>
        <ScrollThumb><Grip /></ScrollThumb>
        <ScrollArrow aria-label="Вниз"><Icon w={8} h={5} tone="none"><path d="M0 0l4 5 4-5z" fill="#aaa" /></Icon></ScrollArrow>
      </CanvasScroll>
    </Stage>
    <Notes aria-label="Заметки" defaultValue="Нажмите, чтобы добавить заметки" />
  </Center>
);

const ShapeSettings = () => (
  <Settings>
    <Section>
      <PanelTitle as="label" htmlFor="fill">Заливка</PanelTitle>
      <SelectBox>
        <select id="fill"><option>Без заливки</option></select>
        <Chevron />
      </SelectBox>
    </Section>
    <Section>
      <PanelTitle>Контур</PanelTitle>
      <Fields $gap={13}>
        <Field $w={125}>Толщина
          <SelectBox><select><option>Без контура</option></select><Chevron /></SelectBox>
        </Field>
        <Field as="div" $w={60}>Цвет
          <ColorButton aria-label="Цвет">
            <Icon w={44} h={26}><path d="M.5.500h43v25H.5z" stroke="#ddd" /><path d="M1 23L43 1" stroke="#f33" /></Icon>
            <Chevron />
          </ColorButton>
        </Field>
      </Fields>
      <Fields $gap={0} $top={10}>
        <Field $w={125}>Тип
          <SelectBox>
            <select><option aria-label="Сплошная линия"></option></select>
            <LineSample />
            <Chevron />
          </SelectBox>
        </Field>
      </Fields>
    </Section>
    <Section>
      <PanelTitle>Поворот</PanelTitle>
      <Fields $gap={10} $top={11}>
        <div>
          <GroupLabel>Повернуть на 90°</GroupLabel>
          <FlipRow>
            <button aria-label="Повернуть влево"><Icon><path d="M18.500 18C18.500 11 12 5.500 4 4.500M7.500 1.500L4 4.500 7 8" /></Icon></button>
            <button aria-label="Повернуть вправо"><Icon><path d="M2.500 18C2.500 11 9 5.500 17 4.500M13.500 1.500l3.500 3L14 8" /></Icon></button>
          </FlipRow>
        </div>
        <div>
          <GroupLabel>Отразить</GroupLabel>
          <FlipRow>
            <button aria-label="Отразить слева направо"><Icon><path d="M9 2v16H1z" fill="#222" stroke="#222" /><path d="M11.500 2v16H19z" /></Icon></button>
            <button aria-label="Отразить сверху вниз"><Icon><path d="M18 11v8L2 11z" fill="#222" stroke="#222" /><path d="M18 1v7.500H2z" /></Icon></button>
          </FlipRow>
        </div>
      </Fields>
    </Section>
    <Section>
      <ShapeRow>
        <PanelTitle>Изменить автофигуру</PanelTitle>
        <ShapeButton aria-label="Изменить автофигуру">
          <Icon tone="#777"><path d="M8 15.500H2.500v-13h13V8" /><ellipse cx="13.500" cy="14.500" rx="5" ry="4.500" /></Icon>
          <Chevron />
        </ShapeButton>
      </ShapeRow>
    </Section>
    <Section>
      <CheckLabel><input type="checkbox" />Отображать тень</CheckLabel>
    </Section>
    <AdvancedRow><Advanced href="#">Дополнительные параметры</Advanced></AdvancedRow>
  </Settings>
);

const RightRail = () => (
  <Rail $w={52} $side="right">
    <RailButton aria-label="Слайд"><Icon><path d="M1.500 1.500h17v17h-17zM4.500 4.500h11v11h-11z" /></Icon></RailButton>
    <RailButton aria-label="Фигура" $active><ShapesIcon /></RailButton>
    <RailButton aria-label="Изображение"><Picture tone="#aaa" /></RailButton>
    <RailButton aria-label="Абзац"><Icon><path d="M10.500 3v14M13.500 3v14M9 3.500h8" /><path d="M10 3v8C4 11 4 3 10 3z" fill="#222" stroke="#222" /></Icon></RailButton>
    <RailButton aria-label="Таблица"><Icon tone="#aaa"><path d="M.5 3.500h19v13H.5zM.5 9.500h19M.5 13h19M6.500 6v11M13 6v11" /><path d="M.5 3.500h19v3H.5z" fill="#aaa" /></Icon></RailButton>
    <RailButton aria-label="Диаграмма"><Icon tone="#aaa"><path d="M.5 12.500h5v6h-5zM7.500 7.500h5v11h-5zM14.500 2.500h5v16h-5z" /></Icon></RailButton>
    <RailButton aria-label="Текст"><Icon><path d="M3 2.500h9M7.500 2.500v10M4 19c3-4 9-4 12 0" /><Glyph $size={13} $tone="#555" x="10" y="13">a</Glyph></Icon></RailButton>
  </Rail>
);

const StatusBar = () => (
  <Status>
    <StatusGroup $pl={4}>
      <StatusButton $w={32} aria-label="Показ слайдов"><PlayBox /></StatusButton>
      <Chevron />
      <StatusButton $w={112}>Слайд 4 из 4</StatusButton>
    </StatusGroup>
    <span>Все изменения сохранены</span>
    <StatusGroup>
      <StatusButton $w={128}>Русский (Россия)</StatusButton>
      <StatusButton $w={22} aria-label="Выбор языка"><Chevron /></StatusButton>
      <StatusButton $w={30} $mr={11} aria-label="Язык документа">
        <Icon><circle cx="10" cy="10" r="9" /><ellipse cx="10" cy="10" rx="4.500" ry="9" /><path d="M10 1v18M1 10h18M2.500 5.500h15M2.500 14.500h15" /></Icon>
      </StatusButton>
      <StatusButton $w={27} $active aria-label="Проверка орфографии">
        <Icon w={22} h={22}><Glyph $size={9} $face={SANS} $tone="#222" x="1" y="10">АБВ</Glyph><path d="M10 15l3.500 4L20 10" stroke="#000" strokeWidth="2" /></Icon>
      </StatusButton>
      <StatusDivider />
      <StatusButton $w={27} $active aria-label="По размеру слайда">
        <Icon w={22}><path d="M1.500 1.500h19v17h-19z" /><path d="M11 3v4M9 5l2-2 2 2M11 17v-4M9 15l2 2 2-2M3 10h5M5 8l-2 2 2 2M19 10h-5M17 8l2 2-2 2" stroke="#000" /></Icon>
      </StatusButton>
      <StatusButton $w={54} aria-label="По ширине"><Icon w={22} tone="#777"><path d="M1.500 3v14M20.500 3v14M4 10h14M7 7l-3 3 3 3M15 7l3 3-3 3" /></Icon></StatusButton>
      <StatusButton $w={28} aria-label="Уменьшить"><Icon tone="#777"><path d="M3 10.500h14" /></Icon></StatusButton>
      <StatusButton $w={116}>Масштаб 46%</StatusButton>
      <StatusButton $w={22} aria-label="Увеличить"><Icon><path d="M3 10.500h15M10.500 2v16" /></Icon></StatusButton>
    </StatusGroup>
  </Status>
);

export default function App() {
  return (
    <Shell>
      <Global />
      <TopBar />
      <Ribbon />
      <Work>
        <LeftRail />
        <Thumbnails />
        <Editor />
        <ShapeSettings />
        <RightRail />
      </Work>
      <StatusBar />
    </Shell>
  );
}
